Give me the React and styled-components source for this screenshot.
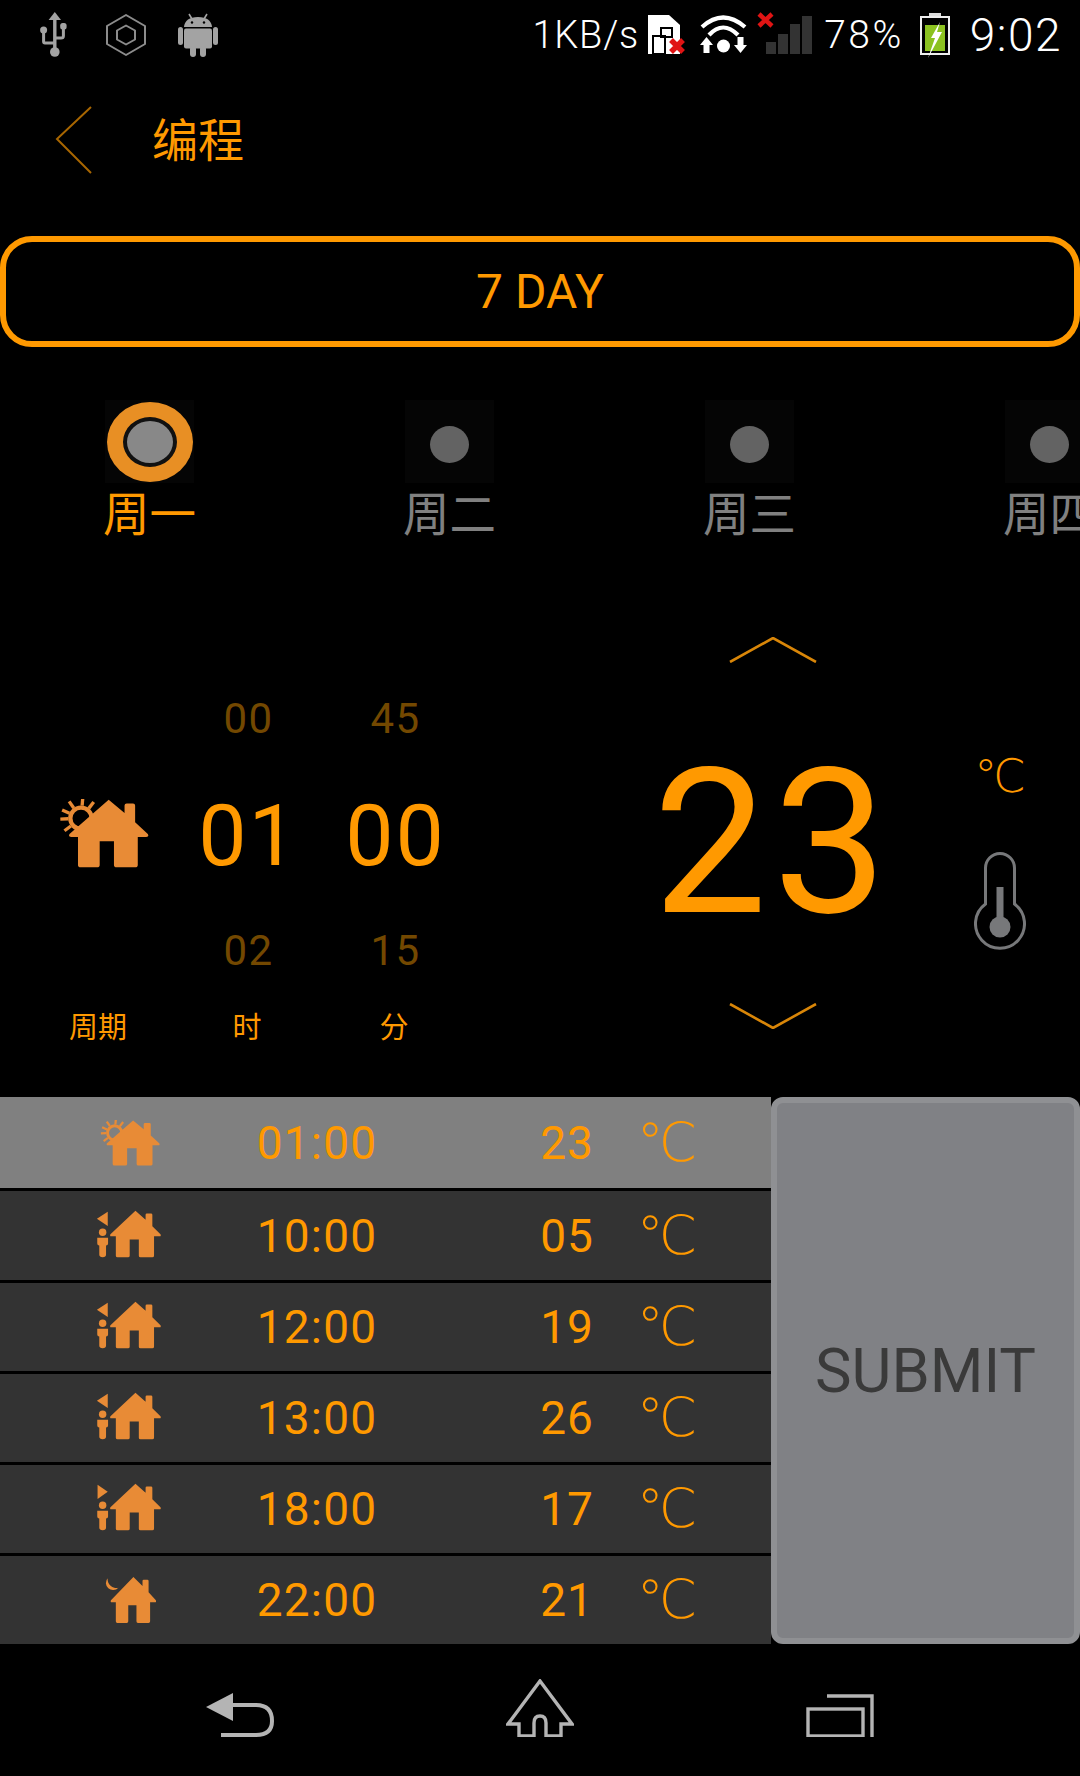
import React from "react";
import styled, { createGlobalStyle } from "styled-components";

const ORANGE = "#ff9900";
const ICON_ORANGE = "#e88b36";

const GlobalStyle = createGlobalStyle`
  html, body {
    margin: 0;
    padding: 0;
    background: #000;
  }
  * {
    box-sizing: border-box;
  }
`;

const Page = styled.div`
  width: 1080px;
  height: 1776px;
  background: #000;
  overflow: hidden;
  display: flex;
  flex-direction: column;
  font-family: Roboto, "Noto Sans CJK SC", sans-serif;
`;

const StatusBar = styled.div`
  height: 70px;
  padding: 0 18px 0 40px;
  display: flex;
  align-items: flex-start;
  color: #fff;
`;

const StatusIcon = styled.svg`
  flex: none;
  display: block;
  margin-top: ${(props) => props.$top}px;
  margin-left: ${(props) => props.$gap}px;
`;

const StatusText = styled.div`
  flex: none;
  font-size: ${(props) => props.$size}px;
  font-weight: 300;
  line-height: 70px;
  letter-spacing: ${(props) => props.$spacing || 0}px;
  margin-left: ${(props) => props.$gap};
`;

const Header = styled.div`
  height: 166px;
  padding: 36px 0 0 55px;
  display: flex;
  align-items: flex-start;
`;

const BackChevron = styled.svg`
  display: block;
  flex: none;
`;

const Title = styled.div`
  margin-left: 60px;
  margin-top: 2px;
  font-size: 46px;
  line-height: 66px;
  color: ${ORANGE};
`;

const ModeButton = styled.div`
  height: 111px;
  border: 6px solid ${ORANGE};
  border-radius: 32px;
  display: flex;
  align-items: center;
  justify-content: center;
  font-size: 48px;
  color: ${ORANGE};
`;

const DayStrip = styled.div`
  margin-top: 53px;
  padding-left: 105px;
  display: flex;
  gap: 211px;
  width: 1300px;
`;

const Day = styled.div`
  width: 89px;
  flex: none;
  display: flex;
  flex-direction: column;
  align-items: center;
`;

const DayMark = styled.div`
  width: 89px;
  height: 83px;
  background: #050505;
  display: flex;
  align-items: center;
  justify-content: center;
`;

const RingOuter = styled.div`
  width: 86px;
  height: 80px;
  border-radius: 50%;
  background: #e88f24;
  display: flex;
  align-items: center;
  justify-content: center;
`;

const RingInner = styled.div`
  width: 54px;
  height: 50px;
  border-radius: 50%;
  background: #888;
  border: 4px solid #111;
`;

const Dot = styled.div`
  width: 39px;
  height: 37px;
  margin-top: 6px;
  border-radius: 50%;
  background: #636363;
`;

const DayLabel = styled.div`
  margin-top: 2px;
  font-size: 46.5px;
  line-height: 60px;
  white-space: nowrap;
  color: ${(props) => (props.$active ? ORANGE : "#808080")};
`;

const Controls = styled.div`
  height: 536px;
  margin-top: 16px;
  display: flex;
`;

const Picker = styled.div`
  width: 469px;
  padding: 100px 0 0 33px;
  flex: none;
  display: grid;
  grid-template-columns: 142px 147px 147px;
  grid-template-rows: 116px 116px 116px 38px;
  justify-items: center;
  align-items: center;
`;

const GhostValue = styled.div`
  font-size: 42px;
  letter-spacing: 1.5px;
  margin-top: -2px;
  color: #734800;
`;

const TimeValue = styled.div`
  font-size: 86px;
  letter-spacing: 2px;
  color: ${ORANGE};
`;

const PickerIcon = styled.div`
  margin-top: -3px;
`;

const PickerLabel = styled.div`
  font-size: 29px;
  line-height: 38px;
  color: ${ORANGE};
  margin-left: ${(props) => props.$shift || 0}px;
`;

const TempColumn = styled.div`
  width: 260px;
  margin-left: 174px;
  padding-top: 76px;
  flex: none;
  display: flex;
  flex-direction: column;
  align-items: center;
`;

const TempValue = styled.div`
  height: 340px;
  padding-top: 20px;
  font-size: 203px;
  letter-spacing: 6px;
  line-height: 320px;
  color: ${ORANGE};
`;

const UnitColumn = styled.div`
  width: 60px;
  margin-left: 67px;
  padding-top: 185px;
  flex: none;
  display: flex;
  flex-direction: column;
  align-items: center;
  gap: 46px;
`;

const Degree = styled.div`
  font-size: ${(props) => props.$size}px;
  line-height: ${(props) => props.$line}px;
  font-weight: 200;
  color: ${ORANGE};
  font-family: "DejaVu Sans", "Noto Sans CJK SC", sans-serif;
`;

const Schedule = styled.div`
  height: 547px;
  display: flex;
`;

const ScheduleList = styled.div`
  width: 771px;
  flex: none;
  display: flex;
  flex-direction: column;
`;

const ScheduleRow = styled.div`
  height: ${(props) => props.$height}px;
  flex: none;
  display: flex;
  align-items: center;
  background: ${(props) => (props.$active ? "#808080" : "#333333")};
  border-bottom: ${(props) => (props.$last ? "0" : "3px solid #000")};
`;

const RowIcon = styled.div`
  width: 260px;
  flex: none;
  display: flex;
  justify-content: center;
`;

const RowTime = styled.div`
  width: 114px;
  flex: none;
  white-space: nowrap;
  display: flex;
  justify-content: center;
  font-size: 46px;
  letter-spacing: 1.2px;
  color: ${ORANGE};
`;

const RowTemp = styled.div`
  width: 100px;
  margin-left: 143px;
  flex: none;
  text-align: center;
  font-size: 46px;
  letter-spacing: 1px;
  color: ${ORANGE};
`;

const RowUnit = styled.div`
  width: 70px;
  margin-left: 15px;
  flex: none;
  display: flex;
  justify-content: center;
`;

const SubmitButton = styled.div`
  flex: 1;
  border: 6px solid #8f9093;
  border-radius: 12px;
  background: #808185;
  display: flex;
  align-items: center;
  justify-content: center;
  font-size: 61.5px;
  color: #3a3a3a;
`;

const NavBar = styled.div`
  flex: 1;
  padding: 0 90px 39px;
  display: grid;
  grid-template-columns: repeat(3, 1fr);
  justify-items: center;
  align-items: end;
`;

const Svg = styled.svg`
  display: block;
  flex: none;
`;

const PersonSvg = styled(Svg)`
  margin: -4px 5px 0 0;
`;

const days = [
  { label: "周一", active: true },
  { label: "周二" },
  { label: "周三" },
  { label: "周四" },
];

const rows = [
  { icon: "sun", time: "01:00", temp: "23", height: 94, active: true },
  { icon: "left", time: "10:00", temp: "05", height: 92 },
  { icon: "left", time: "12:00", temp: "19", height: 91 },
  { icon: "left", time: "13:00", temp: "26", height: 91 },
  { icon: "right", time: "18:00", temp: "17", height: 91 },
  { icon: "moon", time: "22:00", temp: "21", height: 88, last: true },
];

const HOUSE =
  "M75 0 L105 27 V12 Q105 8 109 8 H121 Q125 8 125 12 V46 L149 70 Q152 76 146 76 H130 V133 Q130 138 125 138 H90 Q85 138 85 133 V85 H58 V133 Q58 138 53 138 H22 Q17 138 17 133 V76 H4 Q-2 76 1 70 Z";

const sunRays = [-52, -85, -125, -156, 178, 143];

const SunHouse = ({ width, height }) => (
  <Svg width={width} height={height} viewBox="0 0 270 207">
    <circle cx="66" cy="58" r="32" fill="none" stroke={ICON_ORANGE} strokeWidth="13" />
    {sunRays.map((a) => (
      <line
        key={a}
        x1={66 + 38 * Math.cos((a * Math.PI) / 180)}
        y1={58 + 38 * Math.sin((a * Math.PI) / 180)}
        x2={66 + 62 * Math.cos((a * Math.PI) / 180)}
        y2={58 + 62 * Math.sin((a * Math.PI) / 180)}
        stroke={ICON_ORANGE}
        strokeWidth="10"
      />
    ))}
    <path d={HOUSE} fill={ICON_ORANGE} transform="translate(30 2) scale(1.587 1.471)" />
  </Svg>
);

const PersonHouse = ({ flip }) => (
  <PersonSvg width={67} height={48} viewBox="0 5 197 142" fill={ICON_ORANGE}>
    <polygon points={flip ? "10,10 10,52 40,31" : "40,10 40,52 8,31"} />
    <circle cx="25" cy="71" r="11" />
    <path d="M9 87 H41 V104 Q41 110 35 110 V137 Q35 145 25 145 Q15 145 15 137 V110 Q9 110 9 104 Z" />
    <path d={HOUSE} transform="translate(47 7)" />
  </PersonSvg>
);

const MoonHouse = () => (
  <Svg width={51} height={46} viewBox="0 0 153 138" fill={ICON_ORANGE}>
    <path d="M8 4 A20 20 0 0 0 40 32 A26 26 0 0 1 8 4 Z" />
    <path d={HOUSE} transform="translate(17 0) scale(0.91 1)" />
  </Svg>
);

const RowGlyph = ({ type }) => {
  if (type === "sun") return <SunHouse width={60} height={46} />;
  if (type === "moon") return <MoonHouse />;
  return <PersonHouse flip={type === "right"} />;
};

const UsbIcon = () => (
  <StatusIcon $top={12} $gap={0} width="27" height="45" viewBox="0 0 27 45" fill="#a3a3a3">
    <polygon points="14.8,0 21,8 8.6,8" />
    <rect x="13.1" y="7" width="3.4" height="30" />
    <circle cx="14.8" cy="40" r="4.8" />
    <circle cx="3.6" cy="18" r="3.5" />
    <path d="M3.6 18 V29.5 Q3.6 31 5 31 H14.8" fill="none" stroke="#a3a3a3" strokeWidth="3" />
    <rect x="20.2" y="11" width="6.4" height="6.4" rx="2.5" />
    <path d="M23.4 14 V24 Q23.4 26 21 26 H14.8" fill="none" stroke="#a3a3a3" strokeWidth="3" />
  </StatusIcon>
);

const HexIcon = () => (
  <StatusIcon $top={14} $gap={38} width="42" height="42" viewBox="0 0 42 42" fill="none" stroke="#8c8c8c" strokeWidth="2" strokeLinejoin="round">
    <polygon points="21,1 40,12 40,30 21,41 2,30 2,12" />
    <polygon points="21,11.5 30,16.5 30,25.5 21,30.5 12,25.5 12,16.5" />
  </StatusIcon>
);

const AndroidIcon = () => (
  <StatusIcon $top={13} $gap={31} width="40" height="44" viewBox="0 0 40 44" fill="#a3a3a3">
    <path d="M11 1 L14 6 M29 1 L26 6" stroke="#a3a3a3" strokeWidth="1.6" />
    <path d="M6 14 Q7 4 20 4 Q33 4 34 14 Z" />
    <rect x="6" y="15.5" width="28" height="20" rx="2" />
    <rect x="0" y="14" width="5" height="18" rx="2.5" />
    <rect x="35" y="14" width="5" height="18" rx="2.5" />
    <rect x="12" y="33" width="6" height="11" rx="3" />
    <rect x="22" y="33" width="6" height="11" rx="3" />
    <circle cx="14" cy="9.5" r="1.2" fill="#000" />
    <circle cx="26" cy="9.5" r="1.2" fill="#000" />
  </StatusIcon>
);

const SimIcon = () => (
  <StatusIcon $top={15} $gap={9} width="37" height="40" viewBox="0 0 37 40">
    <path d="M0 0 H21 L32 10 V39 H0 Z" fill="#fff" />
    <path d="M5 21 H17 V39 H5 Z M13 13 H24 V22 H13 Z" fill="none" stroke="#000" strokeWidth="2" />
    <path d="M23 25 L35 37 M35 25 L23 37" stroke="#e01414" strokeWidth="5.5" />
  </StatusIcon>
);

const WifiIcon = () => (
  <StatusIcon $top={15} $gap={15} width="47" height="38" viewBox="0 0 47 38">
    <path d="M2 12 Q23 -7 45 12 M9 20 Q23 5 38 20" fill="none" stroke="#fff" strokeWidth="4.2" />
    <circle cx="23.5" cy="31" r="6.5" fill="#fff" />
    <polygon points="6.5,22 13,30 9.5,30 9.5,38 3.5,38 3.5,30 0,30" fill="#fff" />
    <polygon points="40.5,38 47,30 43.5,30 43.5,22 37.5,22 37.5,30 34,30" fill="#fff" />
  </StatusIcon>
);

const SignalIcon = () => (
  <StatusIcon $top={12} $gap={10} width="55" height="42" viewBox="0 0 55 42">
    <rect x="9" y="30" width="10" height="12" fill="#333" />
    <rect x="21" y="22" width="10" height="20" fill="#333" />
    <rect x="33" y="12" width="10" height="30" fill="#333" />
    <rect x="45" y="4" width="10" height="38" fill="#333" />
    <path d="M2 2 L15 14 M15 2 L2 14" stroke="#e01414" strokeWidth="4.5" />
  </StatusIcon>
);

const BatteryIcon = () => (
  <StatusIcon $top={13} $gap={16} width="30" height="46" viewBox="0 0 30 46">
    <rect x="9" y="0" width="12" height="4" fill="#ddd" />
    <rect x="1" y="4" width="28" height="37" fill="#000" stroke="#eee" strokeWidth="2" />
    <rect x="5" y="12" width="20" height="26" fill="#8cc220" />
    <polygon points="20,9 11,25 15,25 8,45 22,19 17,19" fill="#fff" />
  </StatusIcon>
);

const Chevron = ({ down }) => (
  <Svg width="88" height="26" viewBox="0 0 88 26">
    <polyline
      points={down ? "1,1 44,25 87,1" : "1,25 44,1 87,25"}
      fill="none"
      stroke="#d98608"
      strokeWidth="2.6"
    />
  </Svg>
);

const Thermometer = () => (
  <Svg width="52" height="98" viewBox="0 0 52 98">
    <path
      d="M11.5 52 V16 A14.5 14.5 0 0 1 40.5 16 V52 A24.5 24.5 0 1 1 11.5 52 Z"
      fill="none"
      stroke="#77787a"
      strokeWidth="3"
    />
    <rect x="22.5" y="35" width="7" height="35" fill="#77787a" />
    <circle cx="26" cy="75" r="10.5" fill="#77787a" />
  </Svg>
);

export default function App() {
  return (
    <Page>
      <GlobalStyle />
      <StatusBar>
        <UsbIcon />
        <HexIcon />
        <AndroidIcon />
        <StatusText $size={38} $spacing={0.8} $gap="auto">
          1KB/s
        </StatusText>
        <SimIcon />
        <WifiIcon />
        <SignalIcon />
        <StatusText $size={39} $spacing={2.5} $gap="12px">
          78%
        </StatusText>
        <BatteryIcon />
        <StatusText $size={46} $spacing={1.5} $gap="20px">
          9:02
        </StatusText>
      </StatusBar>

      <Header>
        <BackChevron width="37" height="68" viewBox="0 0 37 68">
          <polyline points="36,1 2,33 36,67" fill="none" stroke="#a86600" strokeWidth="2" />
        </BackChevron>
        <Title>编程</Title>
      </Header>

      <ModeButton>7 DAY</ModeButton>

      <DayStrip>
        {days.map((day) => (
          <Day key={day.label}>
            <DayMark>
              {day.active ? (
                <RingOuter>
                  <RingInner />
                </RingOuter>
              ) : (
                <Dot />
              )}
            </DayMark>
            <DayLabel $active={day.active}>{day.label}</DayLabel>
          </Day>
        ))}
      </DayStrip>

      <Controls>
        <Picker>
          <span />
          <GhostValue>00</GhostValue>
          <GhostValue>45</GhostValue>
          <PickerIcon>
            <SunHouse width={90} height={69} />
          </PickerIcon>
          <TimeValue>01</TimeValue>
          <TimeValue>00</TimeValue>
          <span />
          <GhostValue>02</GhostValue>
          <GhostValue>15</GhostValue>
          <PickerLabel $shift={-12}>周期</PickerLabel>
          <PickerLabel $shift={-3}>时</PickerLabel>
          <PickerLabel $shift={-3}>分</PickerLabel>
        </Picker>

        <TempColumn>
          <Chevron />
          <TempValue>23</TempValue>
          <Chevron down />
        </TempColumn>

        <UnitColumn>
          <Degree $size={46} $line={60}>℃</Degree>
          <Thermometer />
        </UnitColumn>
      </Controls>

      <Schedule>
        <ScheduleList>
          {rows.map((row) => (
            <ScheduleRow key={row.time} $height={row.height} $active={row.active} $last={row.last}>
              <RowIcon>
                <RowGlyph type={row.icon} />
              </RowIcon>
              <RowTime>{row.time}</RowTime>
              <RowTemp>{row.temp}</RowTemp>
              <RowUnit>
                <Degree $size={54} $line={70}>℃</Degree>
              </RowUnit>
            </ScheduleRow>
          ))}
        </ScheduleList>
        <SubmitButton>SUBMIT</SubmitButton>
      </Schedule>

      <NavBar>
        <Svg width="68" height="44" viewBox="0 0 68 44">
          <polygon points="0,14 27,0 27,28" fill="#b4b4b4" />
          <path d="M25 12 H50 Q66 12 66 28 Q66 42 50 42 H15" fill="none" stroke="#b4b4b4" strokeWidth="4" />
        </Svg>
        <Svg width="68" height="58" viewBox="0 0 68 58">
          <path
            d="M34 2 L66 45 H55 V57 H40 V44 Q40 37 34 37 Q28 37 28 44 V57 H13 V45 H2 Z"
            fill="none"
            stroke="#b4b4b4"
            strokeWidth="3.4"
          />
        </Svg>
        <Svg width="68" height="43" viewBox="0 0 68 43" fill="none" stroke="#b4b4b4" strokeWidth="3.4">
          <rect x="2" y="15" width="55" height="27" />
          <path d="M21 2 H66 V45" />
        </Svg>
      </NavBar>
    </Page>
  );
}
